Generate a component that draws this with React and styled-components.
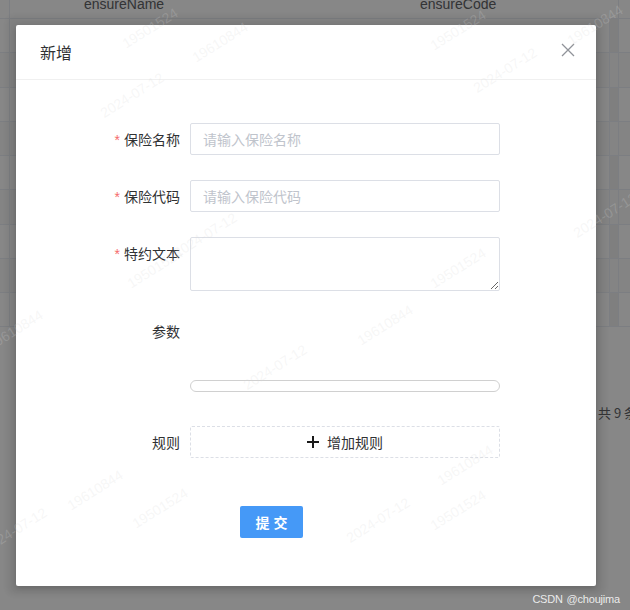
import React from "react";
import styled, { createGlobalStyle } from "styled-components";

const GlobalStyle = createGlobalStyle`
  html, body {
    margin: 0;
    padding: 0;
    background: #fff;
    font-family: "Liberation Sans", "Noto Sans CJK SC", sans-serif;
  }
  * { box-sizing: border-box; }
`;

const Page = styled.div`
  position: relative;
  width: 630px;
  height: 610px;
  overflow: hidden;
  background: #fff;
`;

const Table = styled.div`
  margin-top: -11px;
  width: 100%;
`;

const Row = styled.div`
  display: grid;
  grid-template-columns: 10px 336px 264px 9px 1fr;
  height: ${(p) => (p.$head ? "30px" : "34.25px")};
  border-bottom: 1px solid #ebeef5;
  background: ${(p) => (p.$stripe ? "#fafafa" : "#fff")};
`;

const Cell = styled.div`
  display: flex;
  align-items: center;
  padding-left: ${(p) => p.$pad || 0}px;
  font-size: 14px;
  color: #606266;
  white-space: nowrap;
  border-right: ${(p) => (p.$line ? "1px solid #ebeef5" : "none")};
  background: ${(p) => (p.$fixed ? "#f0f0f0" : "transparent")};
`;

const Pager = styled.div`
  margin-top: 76px;
  padding-left: 598px;
  white-space: nowrap;
  font-size: 13px;
  color: #606266;
  font-family: "Noto Sans CJK SC", sans-serif;
`;

const Overlay = styled.div`
  position: absolute;
  inset: 0;
  background: rgba(0, 0, 0, 0.47);
`;

const DialogWrap = styled.div`
  position: absolute;
  inset: 0;
  padding: 25px 0 0 16px;
`;

const Dialog = styled.div`
  width: 580px;
  background: #fff;
  border-radius: 2px;
  box-shadow: 0 0 5px 9px rgba(0, 0, 0, 0.06), 0 2px 6px rgba(0, 0, 0, 0.2);
`;

const Header = styled.div`
  display: flex;
  align-items: center;
  justify-content: space-between;
  padding: 15px 20px 15px 24px;
  border-bottom: 1px solid #f0f0f0;
`;

const Title = styled.span`
  font-size: 16px;
  line-height: 24px;
  color: #303133;
  font-family: "Noto Sans CJK SC", sans-serif;
`;

const Close = styled.button`
  width: 16px;
  height: 16px;
  padding: 0;
  border: none;
  background: none;
  display: flex;
  align-items: center;
  justify-content: center;
  margin-top: -4px;
`;

const Body = styled.div`
  padding: 43px 0 48px 74px;
`;

const Item = styled.div`
  display: flex;
  align-items: flex-start;
  margin-bottom: ${(p) => p.$mb || 24}px;
`;

const Label = styled.label`
  width: 100px;
  flex: none;
  padding-right: 10px;
  text-align: right;
  font-size: 14px;
  line-height: 32px;
  color: #303133;
  font-family: "Noto Sans CJK SC", sans-serif;
`;

const Star = styled.span`
  color: #f56c6c;
  margin-right: 4px;
  font-family: "Liberation Sans", sans-serif;
`;

const Input = styled.input`
  width: 310px;
  height: 32px;
  border: 1px solid #dcdfe6;
  border-radius: 2px;
  padding: 0 12px;
  font-size: 14px;
  color: #606266;
  font-family: "Noto Sans CJK SC", sans-serif;
  outline: none;
  &::placeholder {
    color: #c0c4cc;
  }
`;

const TextArea = styled.textarea`
  width: 310px;
  height: 54px;
  border: 1px solid #dcdfe6;
  border-radius: 2px;
  padding: 5px 12px;
  font-size: 14px;
  resize: vertical;
  outline: none;
  display: block;
`;

const Empty = styled.div`
  height: 32px;
`;

const Bar = styled.div`
  margin-left: 100px;
  width: 310px;
  height: 12px;
  border: 1px solid #d0d0d0;
  border-radius: 6px;
  margin-bottom: 34px;
`;

const DashedButton = styled.button`
  width: 310px;
  height: 32px;
  border: 1px dashed #dcdfe6;
  border-radius: 2px;
  background: #fff;
  display: flex;
  align-items: center;
  justify-content: center;
  gap: 8px;
  font-size: 14px;
  color: #303133;
  font-family: "Noto Sans CJK SC", sans-serif;
  padding: 0;
`;

const Submit = styled.button`
  margin-left: 150px;
  width: 63px;
  height: 32px;
  border: none;
  border-radius: 2px;
  background: #4599f7;
  color: #fff;
  font-size: 14px;
  font-weight: 700;
  letter-spacing: 4px;
  padding: 0 0 0 4px;
  font-family: "Noto Sans CJK SC", sans-serif;
`;

const Marks = styled.div`
  position: absolute;
  inset: 0;
  pointer-events: none;
`;

const Mark = styled.span`
  position: absolute;
  left: ${(p) => p.$x}px;
  top: ${(p) => p.$y}px;
  transform: translate(-50%, -50%) rotate(-32deg);
  font-size: 14px;
  color: rgba(215, 215, 215, 0.22);
  white-space: nowrap;
  font-family: "Liberation Sans", sans-serif;
`;

const Credit = styled.span`
  position: absolute;
  right: 10px;
  bottom: 5px;
  font-size: 11px;
  color: rgba(255, 255, 255, 0.85);
  font-family: "Liberation Sans", sans-serif;
  letter-spacing: -0.2px;
  word-spacing: 1px;
`;

const marks = [
  ["19501524", 150, 28],
  ["19610844", 220, 42],
  ["2024-07-12", 132, 95],
  ["19501524", 458, 30],
  ["2024-07-12", 505, 70],
  ["19610844", 595, 25],
  ["2024-07-12", 605, 215],
  ["19610844", 15, 330],
  ["19501524", 155, 268],
  ["2024-07-12", 205, 235],
  ["19501524", 458, 268],
  ["19610844", 385, 325],
  ["2024-07-12", 275, 367],
  ["19610844", 95, 490],
  ["2024-07-12", 15, 530],
  ["19501524", 160, 508],
  ["19610844", 465, 465],
  ["2024-07-12", 378, 520],
  ["19501524", 458, 510],
];

const rows = Array.from({ length: 9 });

export default function App() {
  return (
    <>
      <GlobalStyle />
      <Page>
        <Table>
          <Row $head>
            <Cell $line />
            <Cell $pad={74}>ensureName</Cell>
            <Cell $pad={74}>ensureCode</Cell>
            <Cell $line />
            <Cell />
          </Row>
          {rows.map((_, i) => (
            <Row key={i} $stripe={i % 2 === 1}>
              <Cell $line />
              <Cell />
              <Cell $line />
              <Cell $line $fixed={i % 2 === 0} />
              <Cell />
            </Row>
          ))}
        </Table>
        <Pager>共 9 条</Pager>

        <Overlay />

        <DialogWrap>
          <Dialog>
            <Header>
              <Title>新增</Title>
              <Close aria-label="close">
                <svg width="14" height="14" viewBox="0 0 14 14">
                  <path d="M1 1 L13 13 M13 1 L1 13" stroke="#909399" strokeWidth="1.3" />
                </svg>
              </Close>
            </Header>
            <Body>
              <Item>
                <Label>
                  <Star>*</Star>保险名称
                </Label>
                <Input placeholder="请输入保险名称" />
              </Item>
              <Item>
                <Label>
                  <Star>*</Star>保险代码
                </Label>
                <Input placeholder="请输入保险代码" />
              </Item>
              <Item>
                <Label>
                  <Star>*</Star>特约文本
                </Label>
                <TextArea />
              </Item>
              <Item $mb={33}>
                <Label>参数</Label>
                <Empty />
              </Item>
              <Bar />
              <Item $mb={48}>
                <Label>规则</Label>
                <DashedButton>
                  <svg width="12" height="12" viewBox="0 0 12 12">
                    <path d="M6 0 V12 M0 6 H12" stroke="#1a1a1a" strokeWidth="2" />
                  </svg>
                  增加规则
                </DashedButton>
              </Item>
              <Submit>提交</Submit>
            </Body>
          </Dialog>
        </DialogWrap>

        <Marks>
          {marks.map(([t, x, y], i) => (
            <Mark key={i} $x={x} $y={y}>
              {t}
            </Mark>
          ))}
        </Marks>
        <Credit>CSDN @choujima</Credit>
      </Page>
    </>
  );
}
